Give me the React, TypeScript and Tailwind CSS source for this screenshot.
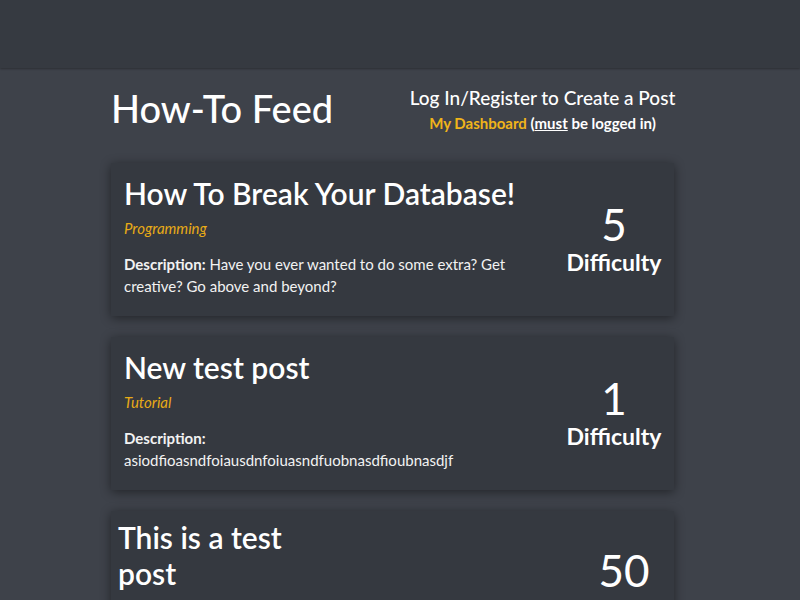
const posts = [
  {
    title: "How To Break Your Database!",
    category: "Programming",
    description: "Have you ever wanted to do some extra? Get creative? Go above and beyond?",
    difficulty: 5,
  },
  {
    title: "New test post",
    category: "Tutorial",
    description: "asiodfioasndfoiausdnfoiuasndfuobnasdfioubnasdjf",
    difficulty: 1,
  },
];

function PostCard({ post }: { post: (typeof posts)[number] }) {
  return (
    <div className="flex bg-[#353940] shadow-[0_2px_10px_rgba(0,0,0,0.45)] pl-[13px] pr-[12px] pt-[13px] pb-[19px]">
      <div className="flex-1 pr-[30px]">
        <h2 className="text-[30px] leading-[34px] font-semibold text-white">{post.title}</h2>
        <p className="mt-[7px] text-[15px] leading-[22px] italic text-[#e8ab17]">{post.category}</p>
        <p className="mt-[14px] text-[15px] leading-[22px] text-[#f2f2f2]">
          <span className="font-bold">Description:</span> {post.description}
        </p>
      </div>
      <div className="w-[96px] flex flex-col items-center pt-[24px]">
        <span className="text-[44px] leading-[48px] text-white">{post.difficulty}</span>
        <span className="text-[23px] leading-[28px] font-bold text-white">Difficulty</span>
      </div>
    </div>
  );
}

export default function App() {
  return (
    <div
      className="min-h-screen bg-[#3e424a] text-white"
      style={{ fontFamily: "Lato, 'Noto Sans', sans-serif" }}
    >
      <header className="h-[68px] bg-[#363a41] shadow-[0_1px_2px_rgba(0,0,0,0.3)]" />

      <main className="ml-[111px] w-[563px]">
        {/* Titre + liens */}
        <div className="flex items-start pt-[17px]">
          <h1 className="flex-1 text-[38px] leading-[46px] font-medium">How-To Feed</h1>
          <div className="w-[263px] flex flex-col items-center whitespace-nowrap">
            <a className="text-[19px] leading-[26px] font-medium">Log In/Register to Create a Post</a>
            <p className="mt-[2px] text-[15px] leading-[20px] font-bold">
              <a className="text-[#f0b41a]">My Dashboard</a> (<span className="underline">must</span> be logged in)
            </p>
          </div>
        </div>

        {/* Posts */}
        <div className="mt-[30px] flex flex-col gap-[21px]">
          {posts.map(post => (
            <PostCard key={post.title} post={post} />
          ))}
          <div className="flex bg-[#353940] shadow-[0_2px_10px_rgba(0,0,0,0.45)] pl-[7px] pr-[12px] pt-[8px] pb-[20px]">
            <div className="flex-1">
              <h2 className="w-[190px] text-[30px] leading-[36px] font-semibold text-white">This is a test post</h2>
            </div>
            <div className="w-[96px] flex flex-col items-center pl-[20px] pt-[27px]">
              <span className="text-[44px] leading-[48px] text-white">50</span>
            </div>
          </div>
        </div>
      </main>
    </div>
  );
}
